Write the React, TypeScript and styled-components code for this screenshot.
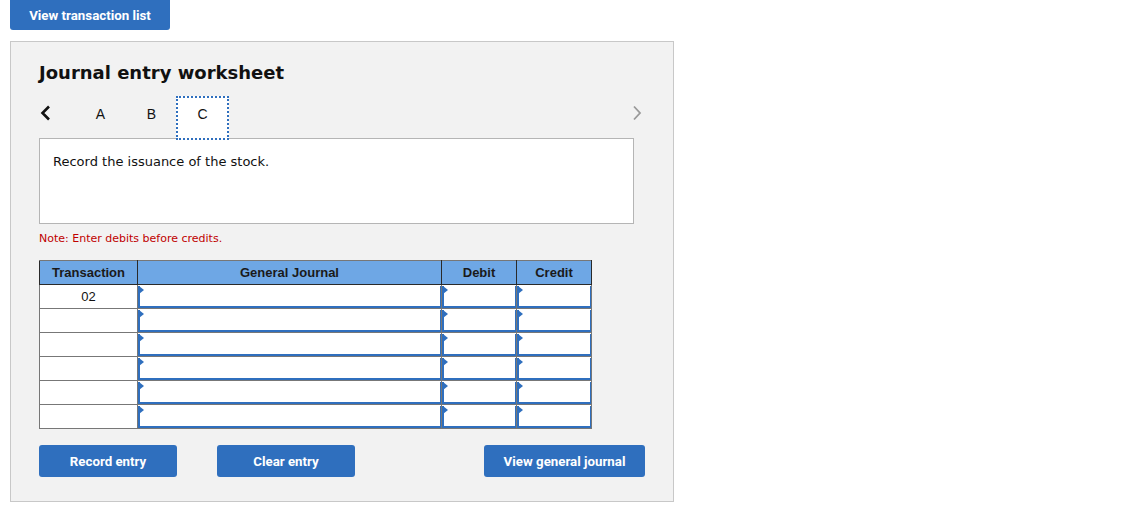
import React from "react";
import styled, { createGlobalStyle } from "styled-components";

const Global = createGlobalStyle`
  html, body { margin: 0; padding: 0; background: #fff; }
  body { font-family: "DejaVu Sans", Verdana, sans-serif; color: #111; }
`;

const Page = styled.div`
  padding: 0 0 0 10px;
  width: 664px;
`;

const BlueButton = styled.button<{ $w: number }>`
  width: ${(p) => p.$w}px;
  height: 32px;
  border: none;
  border-radius: 3px;
  background: #2f6fbe;
  color: #fff;
  font-family: Roboto, "Liberation Sans", sans-serif;
  font-weight: 700;
  font-size: 13.3px;
  padding: 0;
  cursor: pointer;
`;

const TopButton = styled(BlueButton)`
  height: 30px;
  border-radius: 0 0 3px 3px;
  display: block;
`;

const Panel = styled.section`
  margin-top: 11px;
  height: 461px;
  box-sizing: border-box;
  background: #f2f2f2;
  border: 1px solid #c8c8c8;
  padding: 20px 0 0 28px;
  display: flex;
  flex-direction: column;
`;

const Title = styled.h2`
  margin: 0;
  font-size: 18px;
  font-weight: 700;
  line-height: 22px;
  color: #111;
`;

const TabRow = styled.div`
  margin-top: 12px;
  height: 44px;
  width: 604px;
  display: flex;
  align-items: stretch;
  position: relative;
  z-index: 1;
`;

const Chevron = styled.div<{ $muted?: boolean }>`
  width: 36px;
  padding-top: 9px;
  box-sizing: border-box;
  color: ${(p) => (p.$muted ? "#999" : "#111")};
`;

const Tab = styled.div<{ $active?: boolean }>`
  width: ${(p) => (p.$active ? 53 : 51)}px;
  margin-left: ${(p) => (p.$active ? -1 : 0)}px;
  box-sizing: border-box;
  padding-top: 8px;
  text-align: center;
  font-family: "Liberation Sans", Arial, sans-serif;
  font-size: 14px;
  line-height: 16px;
  color: #111;
  background: ${(p) => (p.$active ? "#fff" : "transparent")};
  border: ${(p) => (p.$active ? "2px dotted #2f6fbe" : "2px solid transparent")};
`;

const Spacer = styled.div`
  flex: 1;
`;

const Prompt = styled.div`
  margin-top: -2px;
  width: 595px;
  height: 86px;
  box-sizing: border-box;
  background: #fff;
  border: 1px solid #b5b5b5;
  padding: 15px 0 0 13px;
  font-size: 13px;
  color: #111;
`;

const Note = styled.div`
  margin-top: 8px;
  font-size: 11px;
  color: #c00000;
  line-height: 13px;
`;

const Table = styled.table`
  margin-top: 15px;
  width: 552px;
  border-collapse: collapse;
  border: 1px solid #777;
  font-family: "Liberation Sans", Arial, sans-serif;
  font-size: 13px;
  table-layout: fixed;
`;

const Th = styled.th<{ $w: number }>`
  width: ${(p) => p.$w}px;
  height: 23px;
  padding: 0;
  background: #6ea7e5;
  color: #1a1a1a;
  font-weight: 700;
  border: 1px solid #2a2a2a;
  border-top-color: #777;
  text-align: center;
`;

const TransCell = styled.td`
  height: 23px;
  padding: 0;
  border: 1px solid #777;
  background: #fff;
  text-align: center;
  color: #111;
`;

const InputCell = styled.td`
  height: 23px;
  padding: 0;
  border: 1px solid #777;
  background: #fff;
`;

const Field = styled.div`
  position: relative;
  height: 22px;
  box-sizing: border-box;
  border: 1px solid #2f6fbe;
  border-left-width: 2px;
  border-bottom-width: 2px;
  border-top: none;
  background: #fff;
  &::before {
    content: "";
    position: absolute;
    left: -1px;
    top: 0;
    border-top: 4px solid transparent;
    border-bottom: 4px solid transparent;
    border-left: 5px solid #2f6fbe;
  }
`;

const ButtonRow = styled.div`
  margin-top: 16px;
  width: 606px;
  display: flex;
  gap: 40px;
`;

const RightButton = styled(BlueButton)`
  margin-left: auto;
`;

const Left = () => (
  <svg width="12" height="16" viewBox="0 0 12 16">
    <path d="M10 1.5 L3.5 8 L10 14.5" fill="none" stroke="currentColor" strokeWidth="2.6" />
  </svg>
);
const Right = () => (
  <svg width="12" height="16" viewBox="0 0 12 16">
    <path d="M3 1.5 L9 8 L3 14.5" fill="none" stroke="currentColor" strokeWidth="1.8" />
  </svg>
);

const rows = ["02", "", "", "", "", ""];

export default function App() {
  return (
    <>
      <Global />
      <Page>
        <TopButton $w={160}>View transaction list</TopButton>
        <Panel>
          <Title>Journal entry worksheet</Title>
          <TabRow>
            <Chevron><Left /></Chevron>
            <Tab>A</Tab>
            <Tab>B</Tab>
            <Tab $active>C</Tab>
            <Spacer />
            <Chevron $muted style={{ width: "12px" }}><Right /></Chevron>
          </TabRow>
          <Prompt>Record the issuance of the stock.</Prompt>
          <Note>Note: Enter debits before credits.</Note>
          <Table>
            <thead>
              <tr>
                <Th $w={97}>Transaction</Th>
                <Th $w={303}>General Journal</Th>
                <Th $w={74}>Debit</Th>
                <Th $w={74}>Credit</Th>
              </tr>
            </thead>
            <tbody>
              {rows.map((r, i) => (
                <tr key={i}>
                  <TransCell>{r}</TransCell>
                  <InputCell><Field /></InputCell>
                  <InputCell><Field /></InputCell>
                  <InputCell><Field /></InputCell>
                </tr>
              ))}
            </tbody>
          </Table>
          <ButtonRow>
            <BlueButton $w={138}>Record entry</BlueButton>
            <BlueButton $w={138}>Clear entry</BlueButton>
            <RightButton $w={161}>View general journal</RightButton>
          </ButtonRow>
        </Panel>
      </Page>
    </>
  );
}
